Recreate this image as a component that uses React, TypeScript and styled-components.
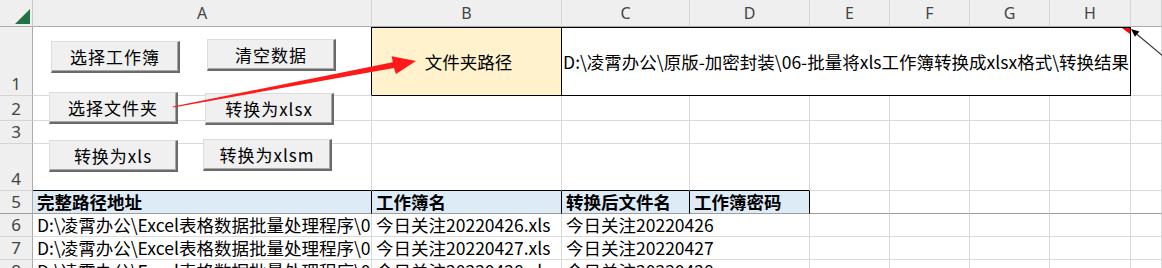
import styled, { createGlobalStyle } from "styled-components";

const GlobalStyle = createGlobalStyle`
  html, body {
    margin: 0;
    padding: 0;
    background: #fff;
  }
  body {
    font-family: "Noto Sans CJK SC", "Noto Sans", sans-serif;
  }
`;

const BLACK = "#000";
const GRID = "#dadada";
const FREEZE = "#9e9e9e";

const COLS = [33, 339, 190, 128, 120, 80, 80, 80, 81, 31];
const ROWS = [27, 69, 25, 23, 47, 23, 23, 23, 23];
const LETTERS = ["A", "B", "C", "D", "E", "F", "G", "H", ""];

const Sheet = styled.div`
  position: relative;
  width: 1162px;
  height: 268px;
  overflow: hidden;
  display: grid;
  grid-template-columns: ${COLS.map((c) => `${c}px`).join(" ")};
  grid-template-rows: ${ROWS.map((r) => `${r}px`).join(" ")};
  color: #000;
`;

const Corner = styled.div`
  position: relative;
  background: #efefef;
  border-right: 1px solid #c8c8c8;
  border-bottom: 1px solid #ababab;
  box-sizing: border-box;

  svg {
    position: absolute;
    left: 15px;
    top: 9px;
  }
`;

const ColHead = styled.div`
  background: #efefef;
  border-right: 1px solid #d4d4d4;
  border-bottom: 1px solid #ababab;
  box-sizing: border-box;
  display: flex;
  align-items: center;
  justify-content: center;
  font-family: "Noto Sans", "Liberation Sans", sans-serif;
  font-size: 16px;
  color: #444;
`;

const RowHead = styled.div<{ $bottom?: string }>`
  background: #efefef;
  border-right: 1px solid #ababab;
  border-bottom: 1px solid ${(p) => p.$bottom ?? "#d4d4d4"};
  box-sizing: border-box;
  display: flex;
  align-items: flex-end;
  justify-content: center;
  font-family: "Noto Sans", "Liberation Sans", sans-serif;
  font-size: 17px;
  line-height: 22px;
  color: #444;
`;

const Cell = styled.div<{
  $span?: number;
  $fill?: string;
  $top?: string;
  $right?: string;
  $bottom?: string;
  $align?: "left" | "center" | "right";
  $valign?: "center" | "bottom";
  $bold?: boolean;
}>`
  grid-column: span ${(p) => p.$span ?? 1};
  box-sizing: border-box;
  background: ${(p) => p.$fill ?? "transparent"};
  border-top: ${(p) => (p.$top ? `1px solid ${p.$top}` : "none")};
  border-right: 1px solid ${(p) => p.$right ?? GRID};
  border-bottom: 1px solid ${(p) => p.$bottom ?? GRID};
  display: flex;
  justify-content: ${(p) =>
    p.$align === "center" ? "center" : p.$align === "right" ? "flex-end" : "flex-start"};
  align-items: ${(p) => (p.$valign === "center" ? "center" : "flex-end")};
  padding: 0 ${(p) => (p.$align === "right" ? "1px" : "0")} 0 4px;
  overflow: hidden;
  white-space: nowrap;
  font-size: 17.5px;
  line-height: 22px;
  font-weight: ${(p) => (p.$bold ? 700 : 400)};
  min-width: 0;

  span {
    flex: ${(p) => (p.$align === "right" ? "none" : "0 1 auto")};
    min-width: 0;
    overflow: hidden;
  }
`;

const ButtonLayer = styled.div`
  position: absolute;
  left: 33px;
  top: 27px;
  padding: 12px 0 0 16px;
  display: grid;
  grid-template-columns: 129px 129px;
  grid-template-rows: 53px 47px 32px;
  column-gap: 26px;
  align-items: start;
  z-index: 1;
`;

const FormButton = styled.button<{ $dx?: number; $dy?: number }>`
  width: 129px;
  height: 32px;
  margin: ${(p) => p.$dy ?? 0}px 0 0 ${(p) => p.$dx ?? 0}px;
  padding: 0;
  box-sizing: border-box;
  background: #f0f0f0;
  border-style: solid;
  border-width: 1px 2px 2px 1px;
  border-color: #dcdcdc #6a6a6a #6a6a6a #dcdcdc;
  box-shadow: inset -1px -1px 0 #a8a8a8;
  font-family: "Noto Sans CJK SC", sans-serif;
  font-size: 17px;
  letter-spacing: 1px;
  color: #000;
  line-height: 28px;
`;

const Overlay = styled.svg`
  position: absolute;
  left: 0;
  top: 0;
  pointer-events: none;
  z-index: 2;
`;

type CellDef = {
  text?: string;
  span?: number;
  fill?: string;
  top?: string;
  right?: string;
  bottom?: string;
  align?: "left" | "center" | "right";
  valign?: "center" | "bottom";
  bold?: boolean;
};

type RowDef = { num: string; bottom?: string; cells: CellDef[] };

const empty = (n: number, extra: CellDef = {}): CellDef[] =>
  Array.from({ length: n }, () => ({ ...extra }));

const FOLDER = "D:\\凌霄办公\\原版-加密封装\\06-批量将xls工作簿转换成xlsx格式\\转换结果";
const SRC = "D:\\凌霄办公\\Excel表格数据批量处理程序\\06-批量将xls工作簿转换成xlsx格式\\";

const dataRow = (num: string, day: string): RowDef => ({
  num,
  cells: [
    { text: `${SRC}今日关注${day}.xls` },
    { text: `今日关注${day}.xls` },
    { text: `今日关注${day}`, span: 2 },
    ...empty(5),
  ],
});

const HEAD: CellDef = { fill: "#ddebf7", right: BLACK, bottom: FREEZE, bold: true };

const rows: RowDef[] = [
  {
    num: "1",
    cells: [
      { right: BLACK },
      {
        text: "文件夹路径",
        fill: "#fff2cc",
        top: BLACK,
        right: BLACK,
        bottom: BLACK,
        align: "center",
        valign: "center",
      },
      { text: FOLDER, span: 6, top: BLACK, right: BLACK, bottom: BLACK, align: "right", valign: "center" },
      {},
    ],
  },
  { num: "2", cells: empty(9) },
  { num: "3", cells: empty(9) },
  { num: "4", cells: [...empty(4, { bottom: BLACK }), ...empty(5)] },
  {
    num: "5",
    bottom: FREEZE,
    cells: [
      { ...HEAD, text: "完整路径地址" },
      { ...HEAD, text: "工作簿名" },
      { ...HEAD, text: "转换后文件名" },
      { ...HEAD, text: "工作簿密码" },
      ...empty(5, { bottom: FREEZE }),
    ],
  },
  dataRow("6", "20220426"),
  dataRow("7", "20220427"),
  dataRow("8", "20220428"),
];

const buttons = [
  { label: "选择工作簿", dx: 2, dy: 2 },
  { label: "清空数据", dx: 3, dy: 0 },
  { label: "选择文件夹", dx: 0, dy: 0 },
  { label: "转换为xlsx", dx: 1, dy: 1 },
  { label: "转换为xls", dx: 0, dy: 1 },
  { label: "转换为xlsm", dx: -1, dy: 0 },
];

function App() {
  return (
    <>
      <GlobalStyle />
      <Sheet>
        <Corner>
          <svg width="15" height="15" viewBox="0 0 15 15">
            <polygon points="15,0 15,15 0,15" fill="#217346" />
          </svg>
        </Corner>
        {LETTERS.map((l, i) => (
          <ColHead key={i}>{l}</ColHead>
        ))}

        {rows.map((row) => [
          <RowHead key={`h${row.num}`} $bottom={row.bottom}>
            {row.num}
          </RowHead>,
          ...row.cells.map((c, i) => (
            <Cell
              key={`${row.num}-${i}`}
              $span={c.span}
              $fill={c.fill}
              $top={c.top}
              $right={c.right}
              $bottom={c.bottom}
              $align={c.align}
              $valign={c.valign}
              $bold={c.bold}
            >
              {c.text && <span>{c.text}</span>}
            </Cell>
          )),
        ])}

        <ButtonLayer>
          {buttons.map((b) => (
            <FormButton key={b.label} $dx={b.dx} $dy={b.dy}>
              {b.label}
            </FormButton>
          ))}
        </ButtonLayer>

        <Overlay width="1162" height="268" viewBox="0 0 1162 268">
          {/* red arrow from the folder button to the path cell */}
          <polygon
            points="172.9,106.5 392.8,62.2 391.7,56.3 416,61 396,74 394,68 173.1,107.6"
            fill="#ff1a1a"
          />
          {/* comment marker and connector */}
          <polygon points="1122,28 1130,28 1130,34" fill="#ff0000" />
          <line x1="1136" y1="33.5" x2="1164" y2="57" stroke="#3a3a3a" strokeWidth="1.2" />
          <polygon points="1131,29 1139.4,31.4 1134.9,36.8" fill="#000" />
        </Overlay>
      </Sheet>
    </>
  );
}

export default App;
